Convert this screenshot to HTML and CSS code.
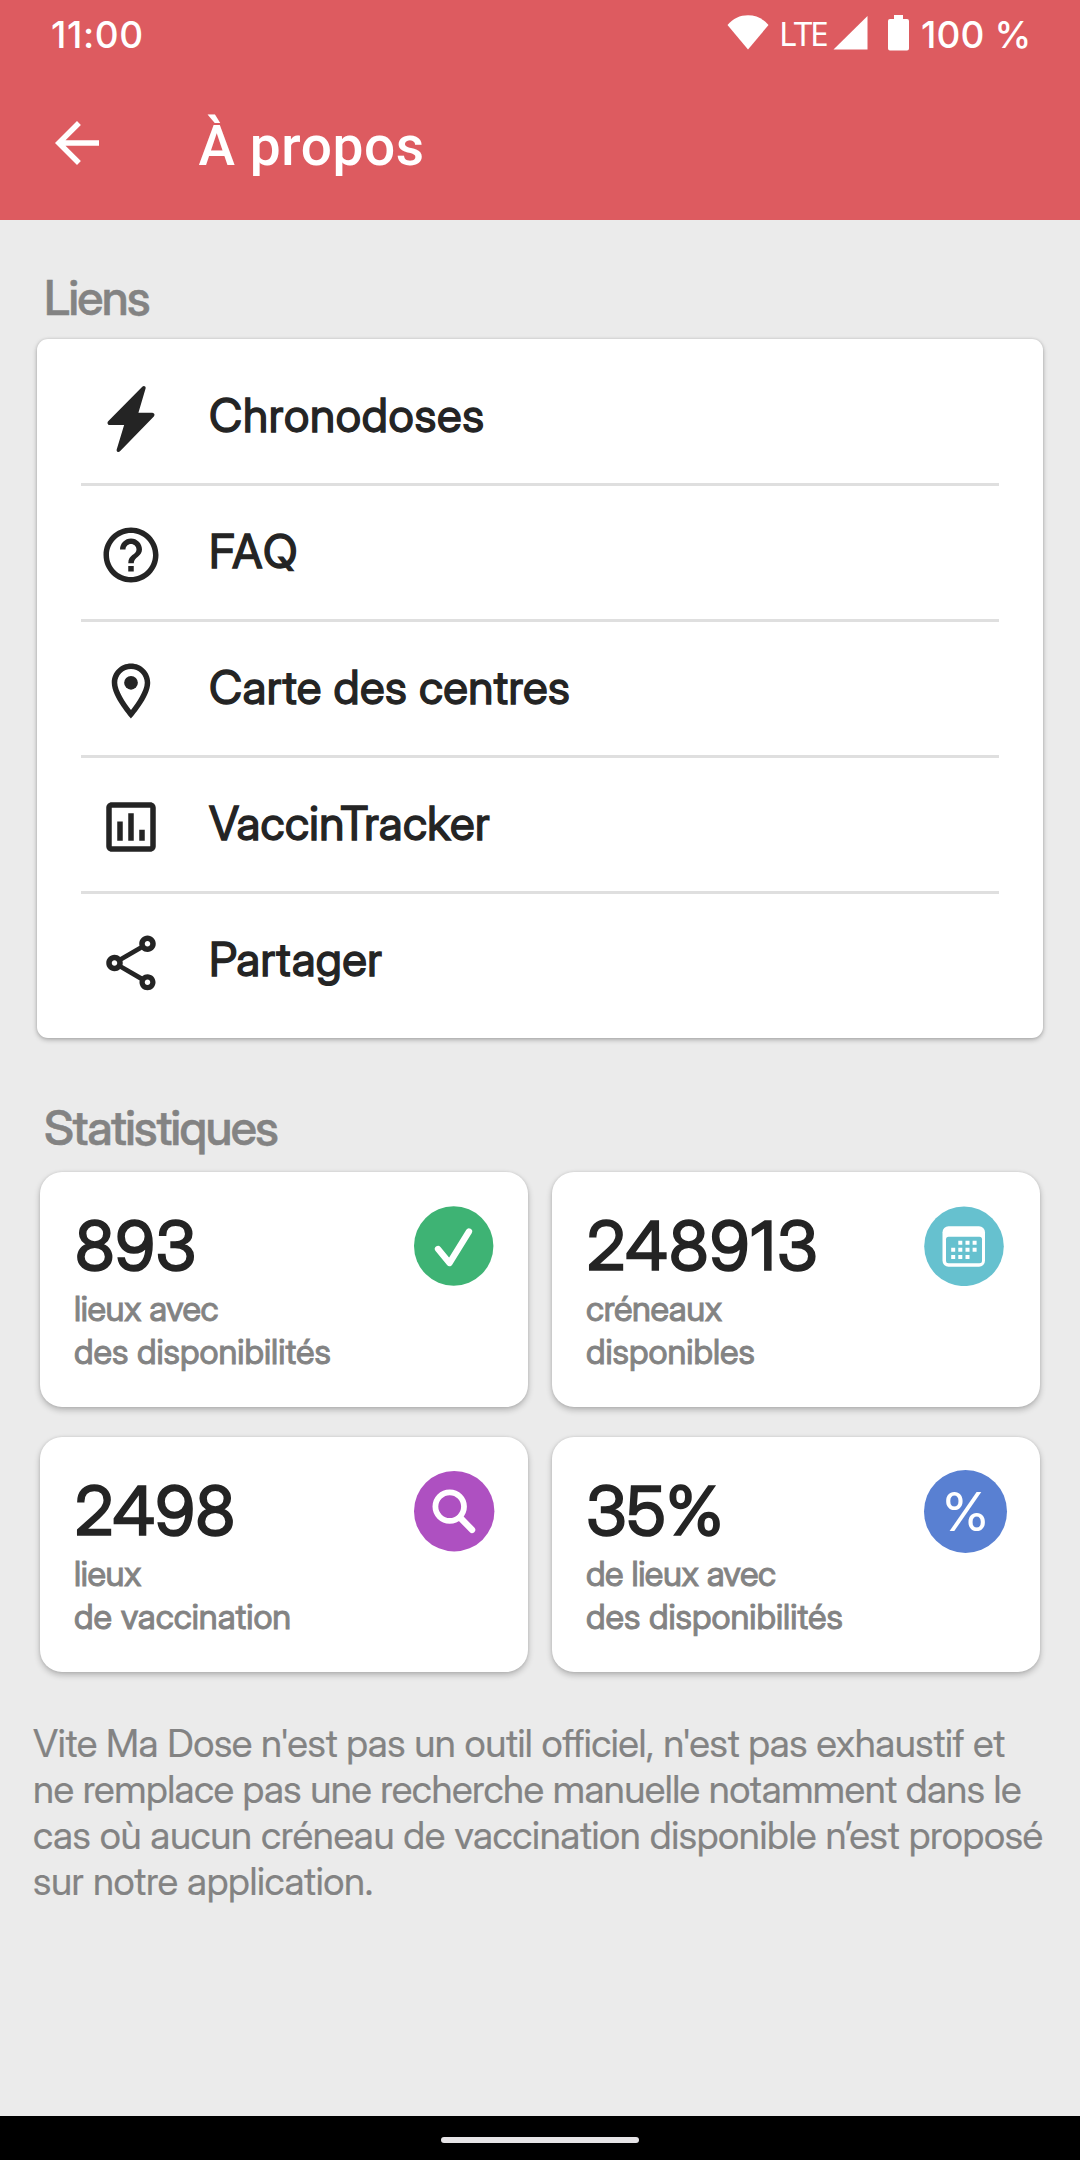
FILE: index.html
```html
<!DOCTYPE html>
<html lang="fr">
<head>
<meta charset="utf-8">
<title>À propos</title>
<link rel="stylesheet" href="styles.css">
</head>
<body>
<header class="header">
  <div class="status">
    <span class="status-clock">11:00</span>
    <svg class="wifi" width="42" height="35" viewBox="0 0 42 35"><path d="M21 34.500.5 10C6 3.500 13 .3 21 .3s15 3.200 20.500 9.700z"/></svg>
    <span class="status-net">LTE</span>
    <svg class="signal" width="35" height="34" viewBox="0 0 35 34"><path d="M.5 33.500 34.500 0v33.500z"/></svg>
    <svg class="battery" width="21" height="36" viewBox="0 0 21 36"><path d="M6 0h9v4h4q2 0 2 2v27.500q0 2-2 2H2q-2 0-2-2V6q0-2 2-2h4z"/></svg>
    <span class="status-level">100 %</span>
  </div>
  <div class="toolbar">
    <svg class="back" width="66" height="66" viewBox="0 0 24 24"><path d="M20 11H7.830l5.590-5.590L12 4l-8 8 8 8 1.410-1.410L7.830 13H20v-2z"/></svg>
    <h1 class="toolbar-title">À propos</h1>
  </div>
</header>
<main class="content">
  <h2 class="section-title">Liens</h2>
  <nav class="links">
    <a class="link"><svg class="link-icon" viewBox="0 0 24 24"><path d="M16.100.3c.5-.6 1.400-.2 1.200.6L14.700 9.700h5c.8 0 1.100.8.600 1.400L8 23.700c-.5.600-1.400.200-1.200-.6L9.500 14.200H4.300c-.8 0-1.100-.8-.6-1.400z"/></svg><span class="link-label link-label--wide">Chronodoses</span></a>
    <a class="link"><svg class="link-icon" viewBox="0 0 24 24"><path d="M11 18h2v-2h-2v2zm1-16C6.480 2 2 6.480 2 12s4.480 10 10 10 10-4.480 10-10S17.520 2 12 2zm0 18c-4.410 0-8-3.590-8-8s3.590-8 8-8 8 3.590 8 8-3.590 8-8 8zm0-14c-2.210 0-4 1.790-4 4h2c0-1.100.9-2 2-2s2 .9 2 2c0 2-3 1.750-3 5h2c0-2.250 3-2.500 3-5 0-2.210-1.790-4-4-4z"/></svg><span class="link-label link-label--caps">FAQ</span></a>
    <a class="link"><svg class="link-icon" viewBox="0 0 24 24"><path d="M12 2C8.130 2 5 5.130 5 9c0 5.250 7 13 7 13s7-7.750 7-13c0-3.870-3.130-7-7-7zM7 9c0-2.760 2.240-5 5-5s5 2.240 5 5c0 2.880-2.880 7.190-5 9.880C9.920 16.210 7 11.850 7 9z"/><circle cx="12" cy="9" r="2.500"/></svg><span class="link-label">Carte des centres</span></a>
    <a class="link"><svg class="link-icon" viewBox="0 0 24 24"><path d="M19 3H5c-1.100 0-2 .9-2 2v14c0 1.100.9 2 2 2h14c1.100 0 2-.9 2-2V5c0-1.100-.9-2-2-2zm0 16H5V5h14v14zM7 10h2v7H7zm4-3h2v10h-2zm4 6h2v4h-2z"/></svg><span class="link-label">VaccinTracker</span></a>
    <a class="link"><svg class="link-icon" viewBox="0 0 24 24"><path d="M18 16.080c-.76 0-1.440.3-1.960.77L8.910 12.700c.05-.23.09-.46.09-.7s-.04-.47-.09-.7l7.050-4.110c.54.500 1.250.81 2.040.81 1.660 0 3-1.340 3-3s-1.340-3-3-3-3 1.340-3 3c0 .24.04.47.09.7L8.040 9.810C7.500 9.310 6.790 9 6 9c-1.660 0-3 1.340-3 3s1.340 3 3 3c.79 0 1.500-.31 2.040-.81l7.120 4.160c-.05.21-.08.43-.08.65 0 1.610 1.310 2.920 2.920 2.920s2.920-1.310 2.920-2.920-1.310-2.920-2.920-2.920zM18 4c.55 0 1 .45 1 1s-.45 1-1 1-1-.45-1-1 .45-1 1-1zM6 13c-.55 0-1-.45-1-1s.45-1 1-1 1 .45 1 1-.45 1-1 1zm12 7.020c-.55 0-1-.45-1-1s.45-1 1-1 1 .45 1 1-.45 1-1 1z"/></svg><span class="link-label">Partager</span></a>
  </nav>
  <h2 class="section-title stats-title">Statistiques</h2>
  <section class="stats">
    <article class="stat">
      <div class="stat-text"><strong class="stat-value">893</strong><p class="stat-label"><span class="tight">lieux avec</span><br>des disponibilités</p></div>
      <svg class="stat-icon" width="80" height="80" viewBox="0 0 80 80"><circle cx="39.700" cy="40" r="39.700" fill="#3eb374"/><path d="M24 43 35.500 57 55 25.500" fill="none" stroke="#fff" stroke-width="6.300" stroke-linecap="round" stroke-linejoin="round"/></svg>
    </article>
    <article class="stat">
      <div class="stat-text"><strong class="stat-value stat-value--wide">248913</strong><p class="stat-label"><span class="tight">créneaux</span><br>disponibles</p></div>
      <svg class="stat-icon" width="80" height="80" viewBox="0 0 80 80"><circle cx="40" cy="40.300" r="39.800" fill="#66c1cf"/><rect x="18.500" y="20.300" width="42.500" height="40.500" rx="6" fill="#fff"/><rect x="22" y="30.700" width="36" height="26.500" rx="2.500" fill="#66c1cf"/><path d="M34.300 34.700h4v4h-4zm7.200 0h4v4h-4zm7.100 0h4v4h-4zM27.200 41.800h4v4h-4zm7.100 0h4v4h-4zm7.200 0h4v4h-4zm7.100 0h4v4h-4zM27.200 48.900h4v4h-4zm7.100 0h4v4h-4zm7.200 0h4v4h-4z" fill="#fff"/></svg>
    </article>
    <article class="stat">
      <div class="stat-text"><strong class="stat-value">2498</strong><p class="stat-label"><span class="tight">lieux</span><br>de vaccination</p></div>
      <svg class="stat-icon" width="81" height="81" viewBox="0 0 81 81"><circle cx="40.200" cy="40.200" r="40.200" fill="#ae50c1"/><g fill="none" stroke="#fff" stroke-width="5.800" stroke-linecap="round"><circle cx="35.700" cy="35.600" r="14.300"/><path d="M46.500 47 58 58.800" stroke-width="6.500"/></g></svg>
    </article>
    <article class="stat">
      <div class="stat-text"><strong class="stat-value stat-value--rate">35%</strong><p class="stat-label"><span class="tight">de lieux avec</span><br>des disponibilités</p></div>
      <span class="stat-icon stat-percent">%</span>
    </article>
  </section>
  <p class="note">Vite Ma Dose n'est pas un outil officiel, n'est pas exhaustif et<br><span class="note-snug">ne remplace pas une recherche manuelle notamment dans le</span><br><span class="note-loose">cas où aucun créneau de vaccination disponible n’est proposé<br>sur notre application.</span></p>
</main>
<footer class="navbar"><span class="navbar-handle"></span></footer>
</body>
</html>
```
FILE: styles.css
```css
* { box-sizing: border-box; margin: 0; padding: 0; }

body {
  width: 1080px;
  height: 2160px;
  display: flex;
  flex-direction: column;
  background: #ebebeb;
  color: #242424;
  font-family: "Inter Display", Inter, "Liberation Sans", sans-serif;
  overflow: hidden;
}

svg { display: block; flex: none; }

.header { height: 220px; background: #dd5b60; color: #fff; fill: #fff; }

.status { height: 66px; display: flex; align-items: flex-start; padding: 0 50px; white-space: nowrap; }
.status-clock, .status-level { font-family: Inter, sans-serif; font-size: 37px; font-weight: 500; line-height: 70px; }
.status-clock { margin-right: auto; padding-left: 1px; letter-spacing: .6px; }
.status-level { width: 109px; letter-spacing: .1px; }
.status-net { width: 54px; margin-left: 10px; font: 400 33.500px/66px "Noto Sans", sans-serif; letter-spacing: -2.200px; }
.wifi { margin-top: 15px; }
.signal { margin-top: 16px; }
.battery { margin: 15px 12px 0 20px; }

.toolbar { height: 154px; display: flex; align-items: center; padding-left: 44px; }
.toolbar-title { margin-left: 88.500px; padding-top: 6px; font: 500 55px/64px Roboto, sans-serif; letter-spacing: .6px; }

.content { flex: 1; padding: 49px 37px 0; }

.section-title {
  height: 56px;
  margin-bottom: 14px;
  padding: 1px 0 0 7px;
  font-size: 48px;
  font-weight: 500;
  line-height: 56px;
  letter-spacing: -1.650px;
  color: #838383;
  -webkit-text-stroke: .5px currentColor;
}
.stats-title { margin: 61px 0 17px; }

.links {
  padding: 11px 44px;
  background: #fff;
  border-radius: 11px;
  box-shadow: 0 2px 5px rgba(0, 0, 0, .26), 0 0 3px rgba(0, 0, 0, .12);
}
.link { height: 133px; display: flex; align-items: center; }
.link + .link { height: 136px; border-top: 3px solid #dfdfdf; }
.link-icon { width: 66px; height: 66px; margin: 4px 45px 0 17px; fill: #242424; }
.link-label { padding-bottom: 4px; font-size: 46px; line-height: 60px; letter-spacing: .33px; -webkit-text-stroke: 1.300px currentColor; }
.link-label--wide { letter-spacing: .72px; }
.link-label--caps { letter-spacing: 2px; }

.stats { display: grid; grid-template-columns: 488px 488px; gap: 30px 24px; padding-left: 3px; }
.stat {
  height: 235px;
  display: flex;
  padding: 31px 0 0 34px;
  background: #fff;
  border-radius: 22px;
  box-shadow: 0 3px 6px rgba(0, 0, 0, .24), 0 0 3px rgba(0, 0, 0, .1);
}
.stat-text { width: 340px; }
.stat:nth-child(even) .stat-text { width: 338px; }
.stat-value { display: block; padding-left: 1px; font-size: 68px; font-weight: 400; line-height: 84px; letter-spacing: .6px; -webkit-text-stroke: 1.700px currentColor; }
.stat-value--wide { letter-spacing: 1.400px; }
.stat-value--rate { padding-left: 0; letter-spacing: 0; }
.stat-label { font-size: 34.500px; line-height: 43px; color: #838383; -webkit-text-stroke: .9px currentColor; }
.tight { letter-spacing: -.4px; }
.stat-icon { margin-top: 3px; flex: none; }
.stat-percent {
  width: 83px;
  height: 83px;
  margin-top: 2px;
  display: flex;
  align-items: center;
  justify-content: center;
  border-radius: 50%;
  background: #5980d2;
  color: #fff;
  font-size: 54px;
}

.note { margin: 48px -4px 0; font-size: 38.500px; line-height: 46px; letter-spacing: -.46px; color: #838383; white-space: nowrap; -webkit-text-stroke: .2px currentColor; }
.note-snug { letter-spacing: -.56px; }
.note-loose { letter-spacing: -.37px; }

.navbar { height: 44px; display: flex; justify-content: center; padding-top: 21px; background: #000; }
.navbar-handle { width: 198px; height: 6px; border-radius: 3px; background: #e6e4e7; }
```
